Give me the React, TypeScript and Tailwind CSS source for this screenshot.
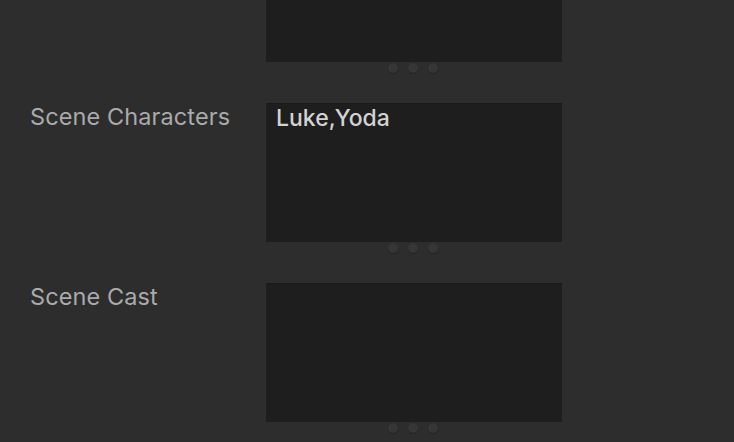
import React from "react";

const rows = [
  { label: "", value: "" },
  { label: "Scene Characters", value: "Luke,Yoda" },
  { label: "Scene Cast", value: "" },
];

function Dots() {
  return (
    <div className="flex justify-center gap-[10px] mt-[1px] mr-[2px] h-[10px]">
      {[0, 1, 2].map((i) => (
        <div
          key={i}
          className="w-[10px] h-[10px] rounded-full bg-[#363636] shadow-[0_1px_1px_rgba(0,0,0,0.25)]"
        />
      ))}
    </div>
  );
}

export default function App() {
  return (
    <div
      className="w-[734px] h-[442px] overflow-hidden bg-[#2d2d2d]"
      style={{ fontFamily: "Inter, 'Liberation Sans', sans-serif" }}
    >
      <div className="flex flex-col gap-[30px] -mt-[77px]">
        {rows.map((r, i) => (
          <div key={i} className="flex">
            <div className="w-[266px] pl-[30px] text-[23.5px] leading-[28px] tracking-[0.1px] text-[#aaaaaa]">
              {r.label}
            </div>
            <div className="w-[296px] flex flex-col">
              <div className="h-[139px] bg-[#1e1e1e] border-t border-[#1a1a1a] px-[10px] text-[23px] leading-[28px] font-medium text-[#d2d2d2]">
                {r.value}
              </div>
              <Dots />
            </div>
          </div>
        ))}
      </div>
    </div>
  );
}
